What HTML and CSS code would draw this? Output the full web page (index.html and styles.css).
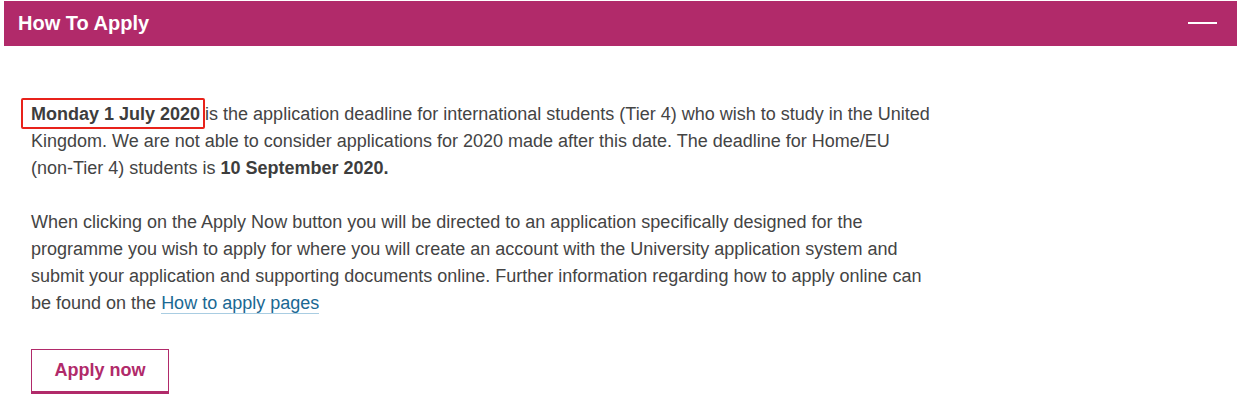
FILE: index.html
```html
<!DOCTYPE html>
<html>
<head>
<meta charset="utf-8">
<link rel="stylesheet" href="styles.css">
</head>
<body>
<section class="panel">
  <header class="panel-head">
    <h2 class="panel-title">How To Apply</h2>
    <span class="collapse-icon"></span>
  </header>
  <div class="panel-body">
    <p class="para"><strong class="mark">Monday 1 July 2020</strong> is the application deadline for international students (Tier 4) who wish to study in the United Kingdom. We are not able to consider applications for 2020 made after this date. The deadline for Home/EU <span class="nowrap">(non-Tier 4)</span> students is <strong>10 September 2020.</strong></p>
    <p class="para">When clicking on the Apply Now button you will be directed to an application specifically designed for the programme you wish to apply for where you will create an account with the University application system and submit your application and supporting documents online. Further information regarding how to apply online can be found on the <a class="link" href="#">How to apply pages</a></p>
    <a class="btn" href="#">Apply now</a>
  </div>
</section>
</body>
</html>
```
FILE: styles.css
```css
html, body { margin: 0; padding: 0; background: #fff; }
body { font-family: "Liberation Sans", Arial, sans-serif; }
.panel { margin: 1px 5px 0 4px; }
.panel-head {
  background: #b12a6a;
  height: 45px;
  display: flex;
  align-items: center;
  justify-content: space-between;
  padding: 0 20px 0 14px;
}
.panel-title {
  margin: 0;
  color: #fff;
  font-size: 20px;
  font-weight: bold;
}
.collapse-icon {
  width: 29px;
  height: 2px;
  background: #fff;
  margin-top: -1px;
}
.panel-body { padding: 55px 0 20px 27px; }
.para {
  margin: 0 0 27px 0;
  width: 910px;
  font-size: 18px;
  line-height: 27px;
  color: #444;
}
.nowrap { white-space: nowrap; }
.para strong { color: #3d3d3d; }
.mark { position: relative; }
.mark::after {
  content: "";
  position: absolute;
  left: -10px;
  right: -5px;
  top: -6px;
  bottom: -5px;
  border: 2px solid #e8221b;
  border-radius: 2px;
}
.link {
  color: #1a6893;
  text-decoration: none;
  border-bottom: 1px solid #a9cde2;
}
.btn {
  display: inline-flex;
  align-items: center;
  justify-content: center;
  box-sizing: border-box;
  width: 138px;
  height: 45px;
  margin-top: 5px;
  border: 1px solid #b12a6a;
  border-bottom-width: 3px;
  color: #b12a6a;
  font-size: 18px;
  font-weight: bold;
  text-decoration: none;
}
```
